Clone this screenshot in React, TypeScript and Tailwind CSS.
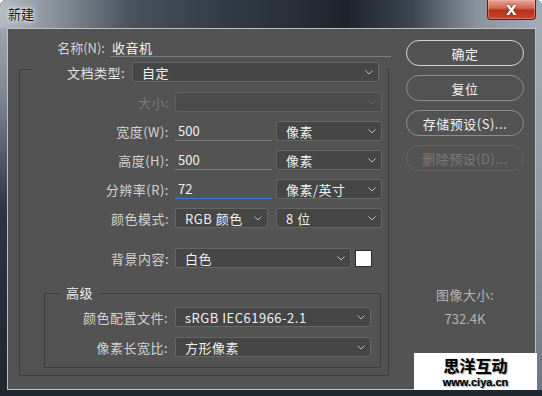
import React from "react";

const FONT = "font-['Noto_Sans_CJK_SC','Noto_Sans',sans-serif]";

function Chevron({ dim }: { dim?: boolean }) {
  return (
    <svg width="8" height="5" viewBox="0 0 8 5" className="shrink-0">
      <polyline
        points="0.5,0.5 4,4 7.5,0.5"
        fill="none"
        stroke={dim ? "#6a6a6a" : "#bdbdbd"}
        strokeWidth="1"
      />
    </svg>
  );
}

function Select({
  value,
  className = "",
  disabled,
}: {
  value?: string;
  className?: string;
  disabled?: boolean;
}) {
  return (
    <div
      className={`flex h-[20px] items-center justify-between rounded-[2px] border pl-[9px] pr-[5px] ${
        disabled ? "border-[#606060] bg-[#4c4c4c]" : "border-[#666666] bg-[#464646]"
      } ${className}`}
    >
      <span className="text-[13px] leading-none tracking-[0.5px] text-[#f0f0f0]">{value}</span>
      <Chevron dim={disabled} />
    </div>
  );
}

function TextField({ value, focus }: { value: string; focus?: boolean }) {
  return (
    <div
      className={`flex h-[19px] w-[97px] items-center border-b pl-[3px] text-[13px] leading-none text-[#f0f0f0] ${
        focus ? "border-[#3d7ad6]" : "border-[#7c7c7c]"
      }`}
    >
      {value}
    </div>
  );
}

function Row({
  label,
  children,
  disabled,
  className = "",
}: {
  label: string;
  children: React.ReactNode;
  disabled?: boolean;
  className?: string;
}) {
  return (
    <div className={`flex h-[20px] items-center ${className}`}>
      <div
        className={`w-[149px] text-right text-[13px] leading-none tracking-[0.5px] ${
          disabled ? "text-[#7c7c7c]" : "text-[#d2d2d2]"
        }`}
      >
        {label}
      </div>
      <div className="ml-[6px] flex items-center">{children}</div>
    </div>
  );
}

function Button({
  label,
  primary,
  disabled,
}: {
  label: string;
  primary?: boolean;
  disabled?: boolean;
}) {
  const tone = primary
    ? "border-[#d6d6d6] text-[#f4f4f4]"
    : disabled
    ? "border-[#646464] text-[#7a7a7a]"
    : "border-[#8e8e8e] text-[#f0f0f0]";
  return (
    <div
      className={`flex h-[26px] w-[118px] items-center justify-center rounded-full border text-[13px] leading-none tracking-[0.5px] ${tone} ${
        primary ? "border-[1.5px]" : ""
      }`}
    >
      {label}
    </div>
  );
}

export default function App() {
  return (
    <div
      className={`relative flex h-[396px] w-[542px] flex-col overflow-hidden rounded-t-[6px] bg-[#1f2730] ${FONT}`}
    >
      {/* title bar */}
      <div className="flex h-[28px] shrink-0 items-start justify-between bg-[linear-gradient(90deg,#b4bbc3_0%,#8d969f_9%,#4a535d_24%,#313a44_42%,#262d36_56%,#1d242c_64%,#3c4550_76%,#8a939d_88%,#a4adb6_100%)]">
        <div className="pl-[8px] pt-[5px] text-[13px] leading-[18px] text-[#111] [text-shadow:0_0_6px_#fff,0_0_3px_#fff]">
          新建
        </div>
        <div className="mr-[6px] flex h-[20px] w-[49px] items-center justify-center rounded-b-[4px] border border-t-0 border-[#5a2219] bg-[linear-gradient(180deg,#e7a699_0%,#d46a56_40%,#b73219_55%,#c6472c_100%)] shadow-[inset_0_0_0_1px_rgba(255,200,190,0.35)]">
          <span className="text-[14px] font-bold leading-none text-white [font-family:'DejaVu_Sans',sans-serif] [text-shadow:0_0_2px_#3a0a00]">
            X
          </span>
        </div>
      </div>

      {/* middle */}
      <div className="flex h-[362px] shrink-0">
        <div className="w-[7px] bg-[linear-gradient(180deg,#9da6af_0%,#7b858f_20%,#2c3540_50%,#1f2731_100%)]" />
        <div className="flex w-[529px] border border-[#b9c0c7] bg-[#535353]">
          {/* left column */}
          <div className="w-[383px] pt-[9px]">
            {/* name */}
            <div className="flex h-[20px] items-start">
              <div className="w-[97px] pt-[3px] text-right text-[13px] leading-none text-[#d2d2d2]">
                名称(N):
              </div>
              <div className="ml-[5px] flex h-[19px] w-[281px] items-center border-b border-[#7c7c7c] pl-[2px] text-[13px] leading-none tracking-[0.5px] text-[#f0f0f0]">
                收音机
              </div>
            </div>

            {/* preset group */}
            <div className="ml-[11px] mt-[11px] h-[307px] w-[370px] border border-[#3d3d3d]">
              <div className="-mt-[8px] ml-[13px] flex w-[353px] items-center bg-[#535353]">
                <div className="w-[92px] text-right text-[13px] leading-none tracking-[0.5px] text-[#e4e4e4]">
                  文档类型:
                </div>
                <Select value="自定" className="ml-[7px] w-[247px] pr-[4px]" />
              </div>

              <Row label="大小:" disabled className="mt-[10px]">
                <Select disabled className="w-[207px]" />
              </Row>
              <Row label="宽度(W):" className="mt-[9px]">
                <TextField value="500" />
                <Select value="像素" className="ml-[4px] w-[106px]" />
              </Row>
              <Row label="高度(H):" className="mt-[9px]">
                <TextField value="500" />
                <Select value="像素" className="ml-[4px] w-[106px]" />
              </Row>
              <Row label="分辨率(R):" className="mt-[9px]">
                <TextField value="72" focus />
                <Select value="像素/英寸" className="ml-[4px] w-[106px]" />
              </Row>
              <Row label="颜色模式:" className="mt-[9px]">
                <Select value="RGB 颜色" className="w-[93px]" />
                <Select value="8 位" className="ml-[8px] w-[106px]" />
              </Row>
              <Row label="背景内容:" className="mt-[20px]">
                <Select value="白色" className="w-[176px]" />
                <div className="ml-[4px] h-[17px] w-[17px] border border-[#2e2e2e] bg-white" />
              </Row>

              {/* advanced */}
              <div className="ml-[24px] mt-[25px] flex h-[75px] w-[337px] flex-col border border-[#3d3d3d]">
                <div className="-mt-[9px] ml-[15px] h-[16px] w-fit bg-[#535353] px-[6px] text-[13px] leading-[16px] tracking-[0.5px] text-[#ececec]">
                  高级
                </div>
                <div className="mt-[6px] flex h-[20px] items-center">
                  <div className="w-[123px] text-right text-[13px] leading-none tracking-[0.5px] text-[#d2d2d2]">
                    颜色配置文件:
                  </div>
                  <Select value="sRGB IEC61966-2.1" className="ml-[7px] w-[196px]" />
                </div>
                <div className="mt-[10px] flex h-[20px] items-center">
                  <div className="w-[123px] text-right text-[13px] leading-none tracking-[0.5px] text-[#d2d2d2]">
                    像素长宽比:
                  </div>
                  <Select value="方形像素" className="ml-[7px] w-[196px]" />
                </div>
              </div>
            </div>
          </div>

          {/* right column */}
          <div className="ml-[15px] flex w-[118px] flex-col items-center pt-[11px]">
            <Button label="确定" primary />
            <div className="mt-[9px]">
              <Button label="复位" />
            </div>
            <div className="mt-[9px]">
              <Button label="存储预设(S)..." />
            </div>
            <div className="mt-[9px]">
              <Button label="删除预设(D)..." disabled />
            </div>
            <div className="mt-[116px] text-[13px] leading-[16px] tracking-[0.5px] text-[#b4b4b4]">
              图像大小:
            </div>
            <div className="mt-[8px] text-[13px] leading-[16px] text-[#b4b4b4]">
              732.4K
            </div>
          </div>
        </div>
        <div className="w-[6px] bg-[linear-gradient(180deg,#a3acb5_0%,#8f99a3_50%,#6d7782_100%)]" />
      </div>

      {/* bottom frame */}
      <div className="h-[6px] shrink-0 bg-[#1f2731]" />

      {/* watermark */}
      <div className="absolute left-[414px] top-[353px] flex h-[37px] w-[123px] flex-col items-center bg-white pt-[4px]">
        <div className="text-[16px] font-bold leading-[17px] text-black [text-shadow:0_0_1px_#888,1px_1px_0_#aaa]">
          思洋互动
        </div>
        <div className="mt-[2px] text-[11px] font-bold leading-[12px] text-black [font-family:'Liberation_Sans',sans-serif] [text-shadow:0_0_1px_#777,1px_1px_0_#aaa]">
          www.ciya.cn
        </div>
      </div>
    </div>
  );
}
